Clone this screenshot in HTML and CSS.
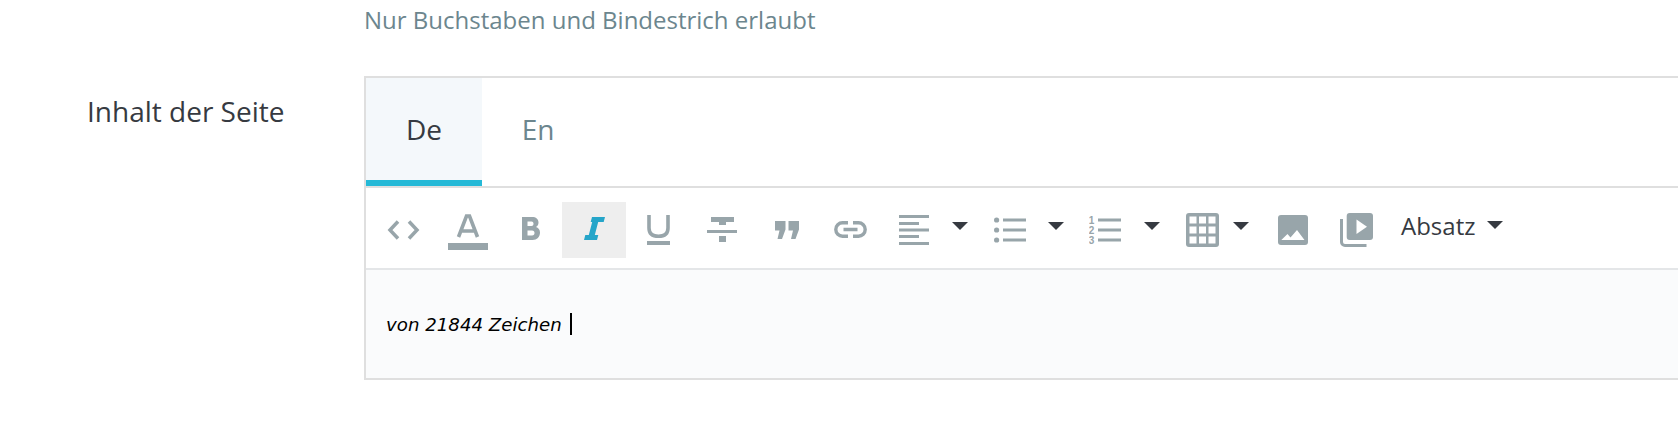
FILE: index.html
```html
<!DOCTYPE html>
<html lang="en">
<head>
    <meta charset="UTF-8">
    <meta name="viewport" content="width=device-width, initial-scale=1.0">
    <title>Inhalt der Seite</title>
    <link rel="stylesheet" href="styles.css">
</head>
<body>

    <div class="field-row hint-row">
        <div class="field-label"></div>
        <div class="field-body">
            <p class="hint">Nur Buchstaben und Bindestrich erlaubt</p>
        </div>
    </div>

    <div class="field-row">
        <div class="field-label">Inhalt der Seite</div>
        <div class="field-body">
            <div class="editor">
                <div class="tabs">
                    <a class="tab active">De</a>
                    <a class="tab">En</a>
                </div>

                <div class="toolbar">
                    <button class="tool tool-code">
                        <svg width="33" height="40" viewBox="0 0 33 40"><path d="M11 11.5 3 20l8 8.5M22 11.5 30 20l-8 8.5" fill="none" stroke="#98a5aa" stroke-width="3.5"/></svg>
                    </button>
                    <button class="tool tool-color">
                        <svg width="40" height="40" viewBox="0 0 40 40"><path d="M10.5 27 18.5 6h3l8 21M13.5 21h13" fill="none" stroke="#98a5aa" stroke-width="3.6"/><rect y="33" width="40" height="7" fill="#98a5aa"/></svg>
                    </button>
                    <button class="tool tool-bold">
                        <svg width="18" height="40" viewBox="0 0 18 40"><path d="M0 7h10c4 0 6.5 2 6.5 5.500 0 2-1 3.700-2.500 4.500 2.300.8 4 2.700 4 5.500 0 4.500-3 7.500-7.500 7.500H0zM5.500 11.500V16h4c1.500 0 2-1 2-2.200s-.5-2.300-2-2.300zM5.500 20.500v5H10c1.800 0 2.500-1.200 2.500-2.500s-.7-2.500-2.500-2.500z" fill="#98a5aa" fill-rule="evenodd"/></svg>
                    </button>
                    <button class="tool tool-italic selected">
                        <svg width="21" height="40" viewBox="0 0 21 40"><path d="M8 7H21L19.7 12H14.2L10.8 25H14.3L13 30H0L1.3 25H4.8L8.2 12H6.700z" fill="#25a5c9"/></svg>
                    </button>
                    <button class="tool tool-underline">
                        <svg width="23" height="40" viewBox="0 0 23 40"><path d="M2 5v13c0 5.500 3.500 8.300 9.500 8.300S21 23.500 21 18V5" fill="none" stroke="#98a5aa" stroke-width="3.600"/><rect y="31" width="23" height="4" fill="#98a5aa"/></svg>
                    </button>
                    <button class="tool tool-strike">
                        <svg width="30" height="40" viewBox="0 0 30 40"><path d="M4 7h23v5h-8v3h-7v-3H4zM0 20h30v3H0zM12 26h7v6h-7z" fill="#98a5aa"/></svg>
                    </button>
                    <button class="tool tool-quote">
                        <svg width="24" height="40" viewBox="0 0 24 40"><path d="M0 11h10.500v8.500L7 29H2.500l2-8.500H0zM13.500 11H24v8.500L20.500 29H16l2-8.500h-4.500z" fill="#98a5aa"/></svg>
                    </button>
                    <button class="tool tool-link">
                        <svg width="33" height="40" viewBox="0 0 33 40"><path d="M14 12.800H8.500a6.700 6.700 0 0 0 0 13.400H14M19 12.800h5.500a6.700 6.700 0 0 1 0 13.400H19M9.500 19.500h14" fill="none" stroke="#98a5aa" stroke-width="3.400"/></svg>
                    </button>
                    <button class="tool dropdown tool-align">
                        <svg width="30" height="40" viewBox="0 0 30 40"><path d="M0 5h30v3H0zM0 12h20v3H0zM0 18.500h30v3H0zM0 25h20v3H0zM0 32h30v3H0z" fill="#98a5aa"/></svg>
                        <span class="caret"></span>
                    </button>
                    <button class="tool dropdown tool-ul">
                        <svg width="32" height="40" viewBox="0 0 32 40"><circle cx="2.600" cy="10" r="2.600" fill="#98a5aa"/><circle cx="2.600" cy="20" r="2.600" fill="#98a5aa"/><circle cx="2.600" cy="30" r="2.600" fill="#98a5aa"/><path d="M9 8.500h23v3H9zM9 18.500h23v3H9zM9 28.500h23v3H9z" fill="#98a5aa"/></svg>
                        <span class="caret"></span>
                    </button>
                    <button class="tool dropdown tool-ol">
                        <svg width="32" height="40" viewBox="0 0 32 40"><text class="ol-num" x="2.500" y="13.800">1</text><text class="ol-num" x="2.500" y="23.800">2</text><text class="ol-num" x="2.500" y="33.800">3</text><path d="M9 8.500h23v3H9zM9 18.500h23v3H9zM9 28.500h23v3H9z" fill="#98a5aa"/></svg>
                        <span class="caret"></span>
                    </button>
                    <button class="tool dropdown tool-table">
                        <svg width="33" height="40" viewBox="0 0 33 40"><rect y="3" width="33" height="34" rx="3" fill="#98a5aa"/><path d="M3.500 6.500h7v7h-7zM13 6.500h7v7h-7zM22.500 6.500h7v7h-7zM3.500 16.500h7v7h-7zM13 16.500h7v7h-7zM22.500 16.500h7v7h-7zM3.500 26.500h7v7h-7zM13 26.500h7v7h-7zM22.500 26.500h7v7h-7z" fill="#fff"/></svg>
                        <span class="caret"></span>
                    </button>
                    <button class="tool tool-image">
                        <svg width="30" height="40" viewBox="0 0 30 40"><rect y="5" width="30" height="30" rx="3" fill="#98a5aa"/><path d="M3.300 30 9.500 24l3 3.500 6.500-7.500 7.500 10z" fill="#fff"/></svg>
                    </button>
                    <button class="tool tool-video">
                        <svg width="33" height="40" viewBox="0 0 33 40"><path d="M1.500 9v23a3.500 3.500 0 0 0 3.500 3.500h21.500" fill="none" stroke="#98a5aa" stroke-width="3"/><rect x="6.700" y="3" width="26.300" height="27" rx="3" fill="#98a5aa"/><path d="M16.500 9.500V24L27 16.750z" fill="#fff"/></svg>
                    </button>
                    <button class="tool tool-format">Absatz<span class="caret"></span></button>
                </div>

                <div class="content"><em>von 21844 Zeichen</em> <span class="cursor"></span></div>
            </div>
        </div>
    </div>

</body>
</html>
```

FILE: styles.css
```css
body {
    font-family: "Open Sans", sans-serif;
    margin: 0;
    padding: 0;
    background-color: #fff;
    color: #363a41;
    height: 425px;
    overflow: hidden;
}
.field-row {
    display: flex;
}
.field-label {
    width: 364px;
    flex: none;
    padding: 19px 0 0 87px;
    box-sizing: border-box;
    font-size: 28px;
    line-height: 32px;
}
.field-body {
    flex: 1;
    min-width: 0;
}
.hint-row {
    height: 76px;
}
.hint-row .field-label {
    padding: 0;
}
.hint {
    margin: 5px 0 0;
    font-size: 24px;
    line-height: 30px;
    color: #6c868e;
}
.editor {
    border: 2px solid #dfdfdf;
    border-right: none;
    height: 304px;
    box-sizing: border-box;
}
.tabs {
    display: flex;
    border-bottom: 2px solid #dfdfdf;
}
.tab {
    width: 112px;
    height: 108px;
    box-sizing: border-box;
    font-size: 28px;
    line-height: 102px;
    text-align: center;
    color: #6c868e;
}
.tab.active {
    width: 116px;
    background-color: #f4f8fb;
    color: #363a41;
    border-bottom: 6px solid #25b9d7;
}
.toolbar {
    display: flex;
    align-items: flex-start;
    height: 82px;
    padding: 14px 0 0 6px;
    border-bottom: 2px solid #e4e6e8;
    box-sizing: border-box;
}
.tool {
    display: flex;
    align-items: center;
    justify-content: center;
    flex: none;
    height: 56px;
    padding: 0;
    border: none;
    background: none;
    font-family: inherit;
}
.tool.selected {
    background-color: #eeeeee;
}
.dropdown {
    justify-content: flex-start;
    padding-left: 19px;
    box-sizing: border-box;
}
.caret {
    width: 0;
    height: 0;
    margin-top: -8px;
    border-left: 8px solid transparent;
    border-right: 8px solid transparent;
    border-top: 8px solid #363a41;
}
.ol-num {
    font-family: "Liberation Sans", sans-serif;
    font-size: 10px;
    font-weight: bold;
    text-anchor: middle;
    fill: #98a5aa;
}
.tool-code { width: 63px; }
.tool-color { width: 65px; }
.tool-bold { width: 62px; }
.tool-italic { width: 64px; }
.tool-underline { width: 65px; }
.tool-strike { width: 62px; }
.tool-quote { width: 68px; }
.tool-link { width: 59px; }
.tool-align { width: 95px; gap: 23px; }
.tool-ul { width: 95px; gap: 22px; }
.tool-ol { width: 97px; gap: 23px; }
.tool-table { width: 89px; gap: 14px; }
.tool-image { width: 74px; }
.tool-video { width: 53px; }
.tool-format {
    font-size: 24px;
    color: #363a41;
    gap: 12px;
    margin-left: 18px;
    padding-bottom: 10px;
    box-sizing: border-box;
}
.tool-format .caret {
    margin-top: 0;
}
.content {
    background-color: #fafbfc;
    height: 108px;
    padding: 43px 0 0 20px;
    box-sizing: border-box;
    font-family: Verdana, "DejaVu Sans", sans-serif;
    font-size: 18.2px;
    line-height: 24px;
    color: #000;
}
.cursor {
    display: inline-block;
    width: 2px;
    height: 22px;
    background-color: #000;
    vertical-align: -4px;
    margin-left: 2px;
}
```
